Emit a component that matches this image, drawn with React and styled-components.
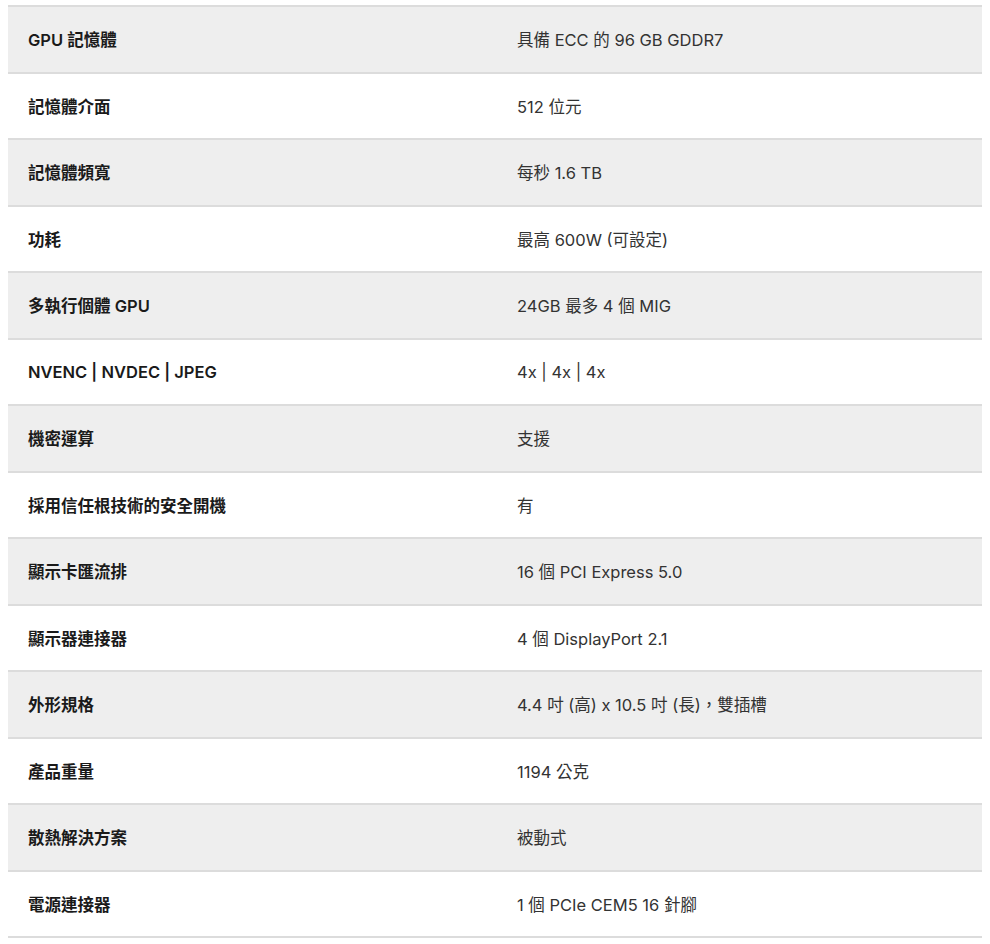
import React from 'react';
import styled, { createGlobalStyle } from 'styled-components';

const GlobalStyle = createGlobalStyle`
    body {
        margin: 0;
        background: #fff;
        font-family: Inter, "Noto Sans CJK TC", sans-serif;
    }
`;

const Page = styled.div`
    padding: 5px 8px 0 8px;
    width: 974px;
`;

const SpecTable = styled.div`
    display: flex;
    flex-direction: column;
    border-top: 2px solid #dcdcdc;
`;

const Row = styled.div`
    display: grid;
    grid-template-columns: 489px 1fr;
    align-items: center;
    height: 64.5px;
    background-color: ${props => (props.shaded ? '#eeeeee' : '#ffffff')};
    border-bottom: 2px solid #dcdcdc;
`;

const Label = styled.div`
    padding-left: 20px;
    font-size: 16.5px;
    font-weight: 600;
    color: #1a1a1a;
    font-family: Inter, "Noto Sans CJK TC", sans-serif;
`;

const Value = styled.div`
    padding-left: 20px;
    font-size: 16.5px;
    color: #333;
    font-family: Inter, "Noto Sans CJK TC", sans-serif;
`;

const specs = [
    ['GPU 記憶體', '具備 ECC 的 96 GB GDDR7'],
    ['記憶體介面', '512 位元'],
    ['記憶體頻寬', '每秒 1.6 TB'],
    ['功耗', '最高 600W (可設定)'],
    ['多執行個體 GPU', '24GB 最多 4 個 MIG'],
    ['NVENC | NVDEC | JPEG', '4x | 4x | 4x'],
    ['機密運算', '支援'],
    ['採用信任根技術的安全開機', '有'],
    ['顯示卡匯流排', '16 個 PCI Express 5.0'],
    ['顯示器連接器', '4 個 DisplayPort 2.1'],
    ['外形規格', '4.4 吋 (高) x 10.5 吋 (長)，雙插槽'],
    ['產品重量', '1194 公克'],
    ['散熱解決方案', '被動式'],
    ['電源連接器', '1 個 PCIe CEM5 16 針腳'],
];

function App() {
    return (
        <>
            <GlobalStyle />
            <Page>
                <SpecTable>
                    {specs.map(([label, value], i) => (
                        <Row key={label} shaded={i % 2 === 0}>
                            <Label>{label}</Label>
                            <Value>{value}</Value>
                        </Row>
                    ))}
                </SpecTable>
            </Page>
        </>
    );
}

export default App;
